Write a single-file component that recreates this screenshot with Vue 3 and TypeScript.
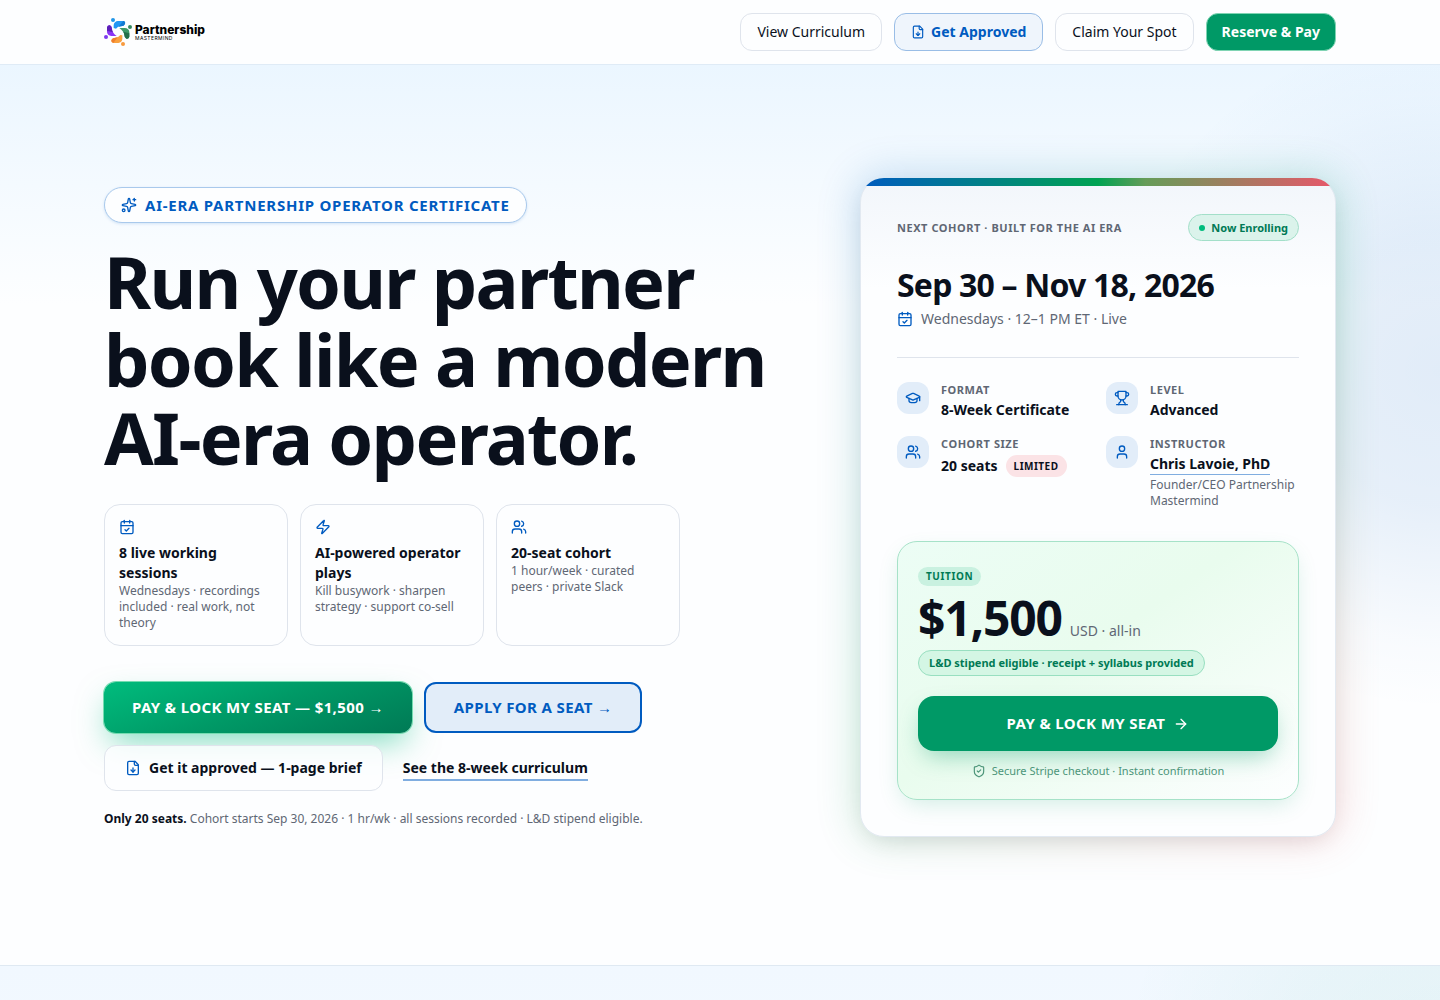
<script setup lang="ts">
import { h, type FunctionalComponent } from 'vue'

type Shape = [tag: string, attrs: Record<string, string>]

const p = (d: string): Shape => ['path', { d }]

const icons: Record<string, Shape[]> = {
  sparkles: [
    p('M11.017 2.814a1 1 0 0 1 1.966 0l1.051 5.558a2 2 0 0 0 1.594 1.594l5.558 1.051a1 1 0 0 1 0 1.966l-5.558 1.051a2 2 0 0 0-1.594 1.594l-1.051 5.558a1 1 0 0 1-1.966 0l-1.051-5.558a2 2 0 0 0-1.594-1.594l-5.558-1.051a1 1 0 0 1 0-1.966l5.558-1.051a2 2 0 0 0 1.594-1.594z'),
    p('M20 2v4'),
    p('M22 4h-4'),
    ['circle', { cx: '4', cy: '20', r: '2' }],
  ],
  calendar: [
    p('M8 2v4'),
    p('M16 2v4'),
    ['rect', { width: '18', height: '18', x: '3', y: '4', rx: '2' }],
    p('M3 10h18'),
    p('m9 16 2 2 4-4'),
  ],
  zap: [
    p('M4 14a1 1 0 0 1-.78-1.63l9.9-10.2a.5.5 0 0 1 .86.46l-1.92 6.02A1 1 0 0 0 13 10h7a1 1 0 0 1 .78 1.63l-9.9 10.2a.5.5 0 0 1-.86-.46l1.92-6.02A1 1 0 0 0 11 14z'),
  ],
  users: [
    p('M16 21v-2a4 4 0 0 0-4-4H6a4 4 0 0 0-4 4v2'),
    ['circle', { cx: '9', cy: '7', r: '4' }],
    p('M16 3.128a4 4 0 0 1 0 7.744'),
    p('M22 21v-2a4 4 0 0 0-3-3.87'),
  ],
  user: [
    p('M19 21v-2a4 4 0 0 0-4-4H9a4 4 0 0 0-4 4v2'),
    ['circle', { cx: '12', cy: '7', r: '4' }],
  ],
  file: [
    p('M15 2H6a2 2 0 0 0-2 2v16a2 2 0 0 0 2 2h12a2 2 0 0 0 2-2V7Z'),
    p('M14 2v4a2 2 0 0 0 2 2h4'),
    p('M12 18v-6'),
    p('m9 15 3 3 3-3'),
  ],
  cap: [
    p('M21.42 10.922a1 1 0 0 0-.019-1.838L12.83 5.18a2 2 0 0 0-1.66 0L2.6 9.08a1 1 0 0 0 0 1.832l8.57 3.908a2 2 0 0 0 1.66 0z'),
    p('M22 10v6'),
    p('M6 12.5V16a6 3 0 0 0 12 0v-3.5'),
  ],
  trophy: [
    p('M6 9H4.5a2.5 2.5 0 0 1 0-5H6'),
    p('M18 9h1.5a2.5 2.5 0 0 0 0-5H18'),
    p('M4 22h16'),
    p('M10 14.66V17c0 .55-.47.98-.97 1.21C7.85 18.75 7 20.24 7 22'),
    p('M14 14.66V17c0 .55.47.98.97 1.21C16.15 18.75 17 20.24 17 22'),
    p('M18 2H6v7a6 6 0 0 0 12 0V2Z'),
  ],
  arrow: [p('M5 12h14'), p('m12 5 7 7-7 7')],
  shield: [
    p('M20 13c0 5-3.5 7.5-7.66 8.95a1 1 0 0 1-.67-.01C7.5 20.5 4 18 4 13V6a1 1 0 0 1 1-1c2 0 4.5-1.2 6.24-2.72a1.17 1.17 0 0 1 1.52 0C14.51 3.81 17 5 19 5a1 1 0 0 1 1 1z'),
    p('m9 12 2 2 4-4'),
  ],
}

const Icon: FunctionalComponent<{ name: string; size?: number }> = ({ name, size = 16 }) =>
  h(
    'svg',
    {
      width: size,
      height: size,
      viewBox: '0 0 24 24',
      fill: 'none',
      stroke: 'currentColor',
      'stroke-width': 2,
      'stroke-linecap': 'round',
      'stroke-linejoin': 'round',
      'aria-hidden': 'true',
      class: 'icon',
    },
    icons[name].map(([tag, attrs]) => h(tag, attrs)),
  )
Icon.props = ['name', 'size']

const features = [
  { icon: 'calendar', title: '8 live working sessions', text: 'Wednesdays · recordings included · real work, not theory' },
  { icon: 'zap', title: 'AI-powered operator plays', text: 'Kill busywork · sharpen strategy · support co-sell' },
  { icon: 'users', title: '20-seat cohort', text: '1 hour/week · curated peers · private Slack' },
]
</script>

<template>
  <div class="page">
    <header class="topbar">
      <div class="container topbar-row">
        <a href="#" class="logo" aria-label="Partnership Mastermind">
          <svg width="28" height="28" viewBox="0 0 84 84" aria-hidden="true">
            <circle cx="27" cy="6" r="6" fill="#2196e8" />
            <path d="M29 30V21Q31 10 42 9H58Q65 10 63 18Q60 25 51 25Q41 25 36 32Z" fill="#2196f3" />
            <path d="M58 9Q65 10 63 18Q60 25 51 25Q47 25 43 27Z" fill="#1479d0" />
            <circle cx="78" cy="27" r="6" fill="#34885f" />
            <path d="M46 30H62Q75 31 76 42V56Q74 64 67 62Q61 59 61 51Q60 40 46 30Z" fill="#3d9968" />
            <path d="M76 46V56Q74 64 67 62Q61 59 61 51Q61 46 58 41Z" fill="#256e49" />
            <circle cx="57" cy="78" r="6" fill="#f79a3e" />
            <path d="M55 52V63Q54 74 43 75H28Q21 73 22 66Q26 59 34 59Q43 59 49 51Z" fill="#f9a13e" />
            <path d="M28 75Q21 73 22 66Q26 59 34 59Q38 59 41 58Z" fill="#f07f2b" />
            <circle cx="6" cy="57" r="6" fill="#7c3aed" />
            <path d="M38 54H22Q10 53 9 42V28Q11 21 18 22Q24 25 24 34Q25 45 38 54Z" fill="#8b35f5" />
            <path d="M9 38V28Q11 21 18 22Q24 25 24 34Q24 39 27 43Z" fill="#5c1fb8" />
          </svg>
          <span class="wordmark">
            <span class="word-main">Partnership</span>
            <span class="word-sub">MASTERMIND</span>
          </span>
        </a>
        <nav class="actions">
          <a href="#curriculum" class="nav-btn">View Curriculum</a>
          <a href="#approve" class="nav-btn approve"><Icon name="file" :size="14" />Get Approved</a>
          <a href="#apply" class="nav-btn">Claim Your Spot</a>
          <a href="#pay" class="nav-btn reserve">Reserve &amp; Pay</a>
        </nav>
      </div>
    </header>

    <main>
      <section class="hero">
        <div class="container hero-grid">
          <div class="intro">
            <span class="eyebrow"><Icon name="sparkles" />AI-ERA PARTNERSHIP OPERATOR CERTIFICATE</span>
            <h1>Run your partner book like a modern AI-era operator.</h1>
            <ul class="features">
              <li v-for="f in features" :key="f.title">
                <Icon :name="f.icon" />
                <strong>{{ f.title }}</strong>
                <span>{{ f.text }}</span>
              </li>
            </ul>
            <div class="cta-row">
              <a href="#pay" class="cta primary">PAY &amp; LOCK MY SEAT — $1,500 →</a>
              <a href="#apply" class="cta outline">APPLY FOR A SEAT →</a>
            </div>
            <div class="cta-row second">
              <a href="#approve" class="brief"><Icon name="file" />Get it approved — 1-page brief</a>
              <a href="#curriculum" class="text-link">See the 8-week curriculum</a>
            </div>
            <p class="note"><b>Only 20 seats.</b> Cohort starts Sep 30, 2026 · 1 hr/wk · all sessions recorded · L&amp;D stipend eligible.</p>
          </div>

          <aside class="offer">
            <div class="offer-card">
              <div class="offer-head">
                <span class="label">NEXT COHORT · BUILT FOR THE AI ERA</span>
                <span class="status"><i></i>Now Enrolling</span>
              </div>
              <h2>Sep 30 – Nov 18, 2026</h2>
              <p class="schedule"><Icon name="calendar" />Wednesdays · 12–1 PM ET · Live</p>
              <dl class="facts">
                <div class="fact">
                  <span class="tile"><Icon name="cap" /></span>
                  <div><dt class="label">FORMAT</dt><dd>8-Week Certificate</dd></div>
                </div>
                <div class="fact">
                  <span class="tile"><Icon name="trophy" /></span>
                  <div><dt class="label">LEVEL</dt><dd>Advanced</dd></div>
                </div>
                <div class="fact">
                  <span class="tile"><Icon name="users" /></span>
                  <div>
                    <dt class="label">COHORT SIZE</dt>
                    <dd class="seats">20 seats <span class="limited">LIMITED</span></dd>
                  </div>
                </div>
                <div class="fact">
                  <span class="tile"><Icon name="user" /></span>
                  <div>
                    <dt class="label">INSTRUCTOR</dt>
                    <dd>
                      <a href="#instructor" class="person">Chris Lavoie, PhD</a>
                      <small>Founder/CEO Partnership Mastermind</small>
                    </dd>
                  </div>
                </div>
              </dl>
              <div class="tuition">
                <span class="tag">TUITION</span>
                <p class="price"><strong>$1,500</strong> <span>USD · all-in</span></p>
                <span class="stipend">L&amp;D stipend eligible · receipt + syllabus provided</span>
                <button type="button" class="pay">PAY &amp; LOCK MY SEAT <Icon name="arrow" /></button>
                <p class="secure"><Icon name="shield" :size="14" />Secure Stripe checkout · Instant confirmation</p>
              </div>
            </div>
          </aside>
        </div>
      </section>
      <section class="next"></section>
    </main>
  </div>
</template>

<style>
body {
  margin: 0;
  background: #fdfeff;
}
</style>

<style scoped>
.page {
  --ink: #0a101c;
  --muted: #606774;
  --blue: #005bc0;
  --line: #dfe4ec;
  height: 100vh;
  overflow: hidden;
  color: var(--ink);
  font-family: "Noto Sans", sans-serif;
  font-size: 14px;
  line-height: 20px;
}
.page *,
.page *::before {
  box-sizing: border-box;
}
.icon {
  display: block;
  flex: none;
}
a {
  color: inherit;
  text-decoration: none;
}
h1, h2, p, ul, dl, dd {
  margin: 0;
  padding: 0;
}
.container {
  max-width: 1280px;
  margin: 0 auto;
  padding: 0 24px;
}

/* Top bar */
.topbar {
  background: #fdfeff;
  border-bottom: 1px solid #dfebf6;
}
.topbar-row {
  display: flex;
  align-items: center;
  justify-content: space-between;
  min-height: 64px;
}
.logo {
  display: flex;
  align-items: center;
  gap: 3px;
  color: #000;
}
.wordmark {
  display: flex;
  flex-direction: column;
  font-family: Inter, sans-serif;
}
.word-main {
  font-size: 12px;
  line-height: 12px;
  font-weight: 800;
}
.word-sub {
  font-size: 5px;
  line-height: 5px;
  letter-spacing: 0.08em;
}
.actions {
  display: flex;
  gap: 12px;
}
.nav-btn {
  display: flex;
  align-items: center;
  gap: 6px;
  padding: 8px 16px;
  border: 1px solid var(--line);
  border-radius: 12px;
}
.approve {
  border-color: #99bde6;
  background: #eff5fc;
  color: var(--blue);
  font-weight: 700;
}
.reserve {
  padding: 8px 15px;
  border-color: #7fd4b3;
  background: #009966;
  color: #fff;
  font-weight: 700;
}

/* Hero */
.hero {
  padding: 113px 0 128px;
  border-bottom: 1px solid #dfe9f2;
  background:
    radial-gradient(circle 340px at 100% 305px, rgba(0, 91, 192, 0.11), rgba(0, 91, 192, 0.09) 40%, rgba(0, 91, 192, 0.02) 80%, rgba(0, 91, 192, 0)),
    linear-gradient(#ebf6ff, rgba(253, 254, 255, 0) 240px);
}
.hero-grid {
  display: grid;
  grid-template-columns: repeat(12, 1fr);
  column-gap: 64px;
  align-items: center;
}
.intro {
  grid-column: span 7;
}
.offer {
  grid-column: span 5;
}
.eyebrow {
  display: inline-flex;
  align-items: center;
  gap: 8px;
  padding: 7px 16px;
  border: 1px solid #a9c9ec;
  border-radius: 18px;
  background: #fdfeff;
  color: var(--blue);
  font-size: 15px;
  font-weight: 700;
  letter-spacing: 0.05em;
  box-shadow: 0 1px 3px rgba(0, 91, 192, 0.15);
  vertical-align: top;
}
h1 {
  margin-top: 19px;
  font-size: 72px;
  line-height: 78px;
  font-weight: 700;
  letter-spacing: -0.024em;
}
.features {
  display: grid;
  grid-template-columns: repeat(3, 1fr);
  gap: 12px;
  max-width: 576px;
  margin-top: 28px;
  list-style: none;
}
.features li {
  padding: 14px;
  border: 1px solid var(--line);
  border-radius: 16px;
  background: #fdfeff;
}
.features .icon,
.brief .icon,
.schedule .icon {
  color: var(--blue);
}
.features strong {
  display: block;
  margin-top: 8px;
  font-weight: 700;
}
.features span {
  display: block;
  color: var(--muted);
  font-size: 12px;
  line-height: 16px;
}
.cta-row {
  display: flex;
  flex-wrap: wrap;
  gap: 12px;
  margin-top: 36px;
}
.cta-row.second {
  align-items: center;
  margin-top: 12px;
}
.cta {
  padding: 14px 28px;
  border-radius: 12px;
  font-size: 15px;
  line-height: 23px;
  font-weight: 700;
  letter-spacing: 0.025em;
}
.primary {
  background: linear-gradient(160deg, #00bc7d, #009966 50%, #007a55);
  color: #fff;
  box-shadow: 0 0 0 1px #74dcb0, 0 14px 32px -6px rgba(0, 188, 125, 0.5);
}
.outline {
  padding: 12px 28px;
  border: 2px solid var(--blue);
  background: #e2edf9;
  color: var(--blue);
}
.brief {
  display: flex;
  align-items: center;
  gap: 8px;
  padding: 12px 20px;
  border: 1px solid var(--line);
  border-radius: 12px;
  background: rgba(253, 254, 255, 0.8);
  font-weight: 700;
}
.text-link {
  margin-left: 8px;
  padding: 3px 0 1px;
  border-bottom: 2px solid #80ade0;
  font-weight: 700;
}
.note {
  margin-top: 18px;
  color: var(--muted);
  font-size: 12px;
  line-height: 20px;
}
.note b {
  color: var(--ink);
}

/* Offer card */
.offer {
  position: relative;
  isolation: isolate;
}
.offer::before {
  content: "";
  position: absolute;
  z-index: -1;
  inset: -4px;
  border-radius: 28px;
  background: linear-gradient(135deg, #005bc0, #00a352 50%, #f0505a);
  filter: blur(20px);
  opacity: 0.2;
}
.offer-card {
  position: relative;
  padding: 35px 36px 36px;
  border: 1px solid #e2e9f1;
  border-radius: 24px;
  background: linear-gradient(#f2f6fb, #fdfeff 110px);
  box-shadow: 0 8px 24px -8px rgba(10, 16, 28, 0.12);
}
.offer-card::before {
  content: "";
  position: absolute;
  inset: -1px -1px 0;
  border-radius: 24px;
  background: linear-gradient(90deg, #005bc0, #00a352 50%, #669c58 60%, #e9566a) no-repeat 0 0 / 100% 8px;
  pointer-events: none;
}
.offer-head {
  display: flex;
  align-items: center;
  justify-content: space-between;
}
.label {
  color: var(--muted);
  font-size: 11px;
  line-height: 16px;
  font-weight: 700;
  letter-spacing: 0.05em;
}
.status {
  display: flex;
  align-items: center;
  gap: 6px;
  padding: 5px 10px;
  border: 1px solid #a3dfc9;
  border-radius: 14px;
  background: #dbf3eb;
  color: #007a55;
  font-size: 11px;
  line-height: 15px;
  font-weight: 700;
}
.status i {
  width: 6px;
  height: 6px;
  border-radius: 50%;
  background: #00bc7d;
}
h2 {
  margin-top: 24px;
  font-size: 32px;
  line-height: 40px;
  font-weight: 700;
  letter-spacing: -0.025em;
}
.schedule {
  display: flex;
  align-items: center;
  gap: 8px;
  margin-top: 4px;
  padding-bottom: 28px;
  border-bottom: 1px solid var(--line);
  color: var(--muted);
}
.facts {
  display: grid;
  grid-template-columns: 1fr 1fr;
  gap: 16px;
  margin-top: 24px;
}
.fact {
  display: flex;
  gap: 12px;
}
.tile {
  display: grid;
  flex: none;
  place-items: center;
  width: 32px;
  height: 32px;
  border-radius: 12px;
  background: #e2edf9;
  color: var(--blue);
}
dd {
  margin-top: 2px;
  font-weight: 700;
}
.seats {
  display: flex;
  align-items: center;
  gap: 8px;
  line-height: 24px;
}
.limited {
  padding: 3px 8px;
  border-radius: 12px;
  background: #fbe3e6;
  font-size: 10px;
  line-height: 16px;
  letter-spacing: 0.05em;
}
.person {
  display: inline-block;
  border-bottom: 1px solid #80ade0;
  vertical-align: top;
}
dd small {
  display: block;
  margin-top: 2px;
  color: var(--muted);
  font-size: 12px;
  line-height: 16px;
  font-weight: 400;
}
.tuition {
  margin-top: 32px;
  padding: 25px 20px 20px;
  border: 1px solid #a6e2c8;
  border-radius: 20px;
  background: linear-gradient(145deg, #ecfdf5, #e9fcee 45%, #fdfeff);
  box-shadow: 0 8px 24px -6px rgba(0, 153, 102, 0.2);
}
.tag {
  display: table;
  padding: 2px 8px;
  border-radius: 10px;
  background: #c9f1e0;
  color: #007a55;
  font-size: 10px;
  line-height: 15px;
  font-weight: 700;
  letter-spacing: 0.06em;
}
.price {
  display: flex;
  align-items: baseline;
  gap: 8px;
  margin-top: 8px;
}
.price strong {
  font-size: 48px;
  line-height: 48px;
  letter-spacing: -0.025em;
}
.price span {
  color: var(--muted);
}
.stipend {
  display: table;
  margin-top: 8px;
  padding: 4px 10px;
  border: 1px solid #98dfc0;
  border-radius: 13px;
  background: #d4f6e4;
  color: #007a55;
  font-size: 11px;
  line-height: 16px;
  font-weight: 700;
}
.pay {
  display: flex;
  align-items: center;
  justify-content: center;
  gap: 8px;
  width: 100%;
  margin-top: 20px;
  padding: 16px 24px;
  border: 0;
  border-radius: 16px;
  background: #009966;
  color: #fff;
  font-family: inherit;
  font-size: 15px;
  line-height: 23px;
  font-weight: 700;
  letter-spacing: 0.025em;
  box-shadow: 0 10px 24px -6px rgba(0, 153, 102, 0.4);
}
.secure {
  display: flex;
  align-items: center;
  justify-content: center;
  gap: 6px;
  margin-top: 12px;
  color: #4c9579;
  font-size: 11px;
  line-height: 16px;
}
.next {
  height: 320px;
  background:
    radial-gradient(circle 320px at 100% 110px, rgba(0, 153, 102, 0.06), rgba(0, 153, 102, 0.04) 50%, rgba(0, 153, 102, 0)),
    linear-gradient(#f1f8ff, #f6fbff);
}
</style>
